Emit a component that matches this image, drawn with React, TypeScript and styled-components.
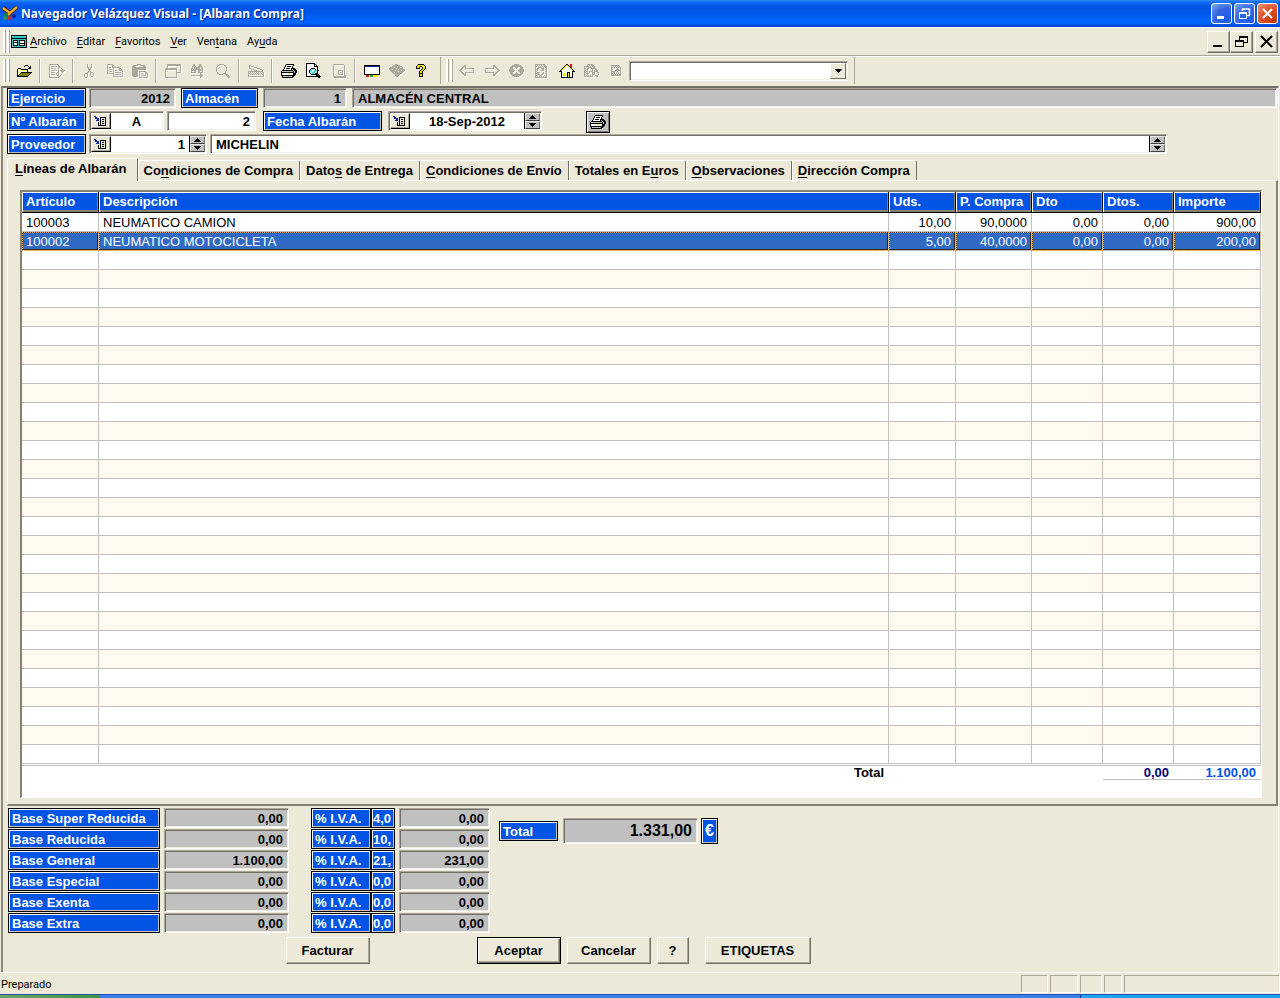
import React from "react";
import styled, { createGlobalStyle, css } from "styled-components";

const FACE = "#ece9d8";
const BLUE = "#0054e3";
const DARK = "#716f64";
const MID = "#aca899";
const SILVER = "#c0c0c0";

const Global = createGlobalStyle`
  *, *::before, *::after { box-sizing: border-box; }
  body { margin: 0; background: ${FACE}; font-family: "Liberation Sans", Arial, sans-serif; font-size: 13px; color: #000; }
  button, input, select { font: inherit; color: inherit; margin: 0; }
  button { padding: 0; }
`;

/* ---------- pixel icons ---------- */

const PALETTE: Record<string, string> = {
  k: "#000000", g: "#aca899", w: "#ffffff", y: "#ffff66", o: "#808000", r: "#d81818",
  b: "#1020a0", c: "#40d8e8", e: "#30a030", s: "#c0c0c0", Y: "#f8e800", t: "#38c8c8",
};

const ART: Record<string, string[]> = {
  open: [
    ".........kkk....",
    "........k...k.k.",
    ".............kk.",
    "..kkk.......kkk.",
    ".kyyykkkkkkk....",
    ".kywywywywyk....",
    ".kwywywywywk....",
    ".kywykkkkkkkkkkk",
    ".kwykoooooooook.",
    ".kykoooooooook..",
    ".kkoooooooook...",
    ".kkkkkkkkkkk....",
  ],
  exportar: [
    "gggggggggg......",
    "g........g......",
    "g.gggggg.gg.....",
    "g........ggg....",
    "g.ggggg..g..g...",
    "g........g...g..",
    "g.gggggg.g.ggggg",
    "g........g..ggg.",
    "g.gggg..gg...g..",
    "g......g.g......",
    "g.gggg.g.g..g...",
    "g.......gg.g....",
    "g........gg.....",
    "gggggggggg......",
  ],
  cut: [
    ".....g...g......",
    ".....g...g......",
    ".....g...g......",
    ".....gg.gg......",
    "......g.g.......",
    "......ggg.......",
    ".......g........",
    "......ggg.......",
    ".....gg.ggg.....",
    "...ggg..g..g....",
    "..g..g..g..g....",
    "..g..g..g..g....",
    "..g..g...gg.....",
    "...gg...........",
  ],
  copy: [
    "gggggg..........",
    "g....gg.........",
    "g....g.g........",
    "g.gg.gggggggg...",
    "g.....g.....gg..",
    "g.ggg.g.....g.g.",
    "g.....g.gg..gggg",
    "g.ggg.g........g",
    "g.....g.gggggg.g",
    "ggggggg........g",
    "......g.gggggg.g",
    "......g........g",
    "......gggggggggg",
  ],
  paste: [
    ".....gggg.......",
    ".ggggg..ggggg...",
    "ggg........ggg..",
    "gggggggggggggg..",
    "gggggggggggggg..",
    "gggggggggggggg..",
    "gggggg..........",
    "gggggg.ggggggg..",
    "gggggg.g.....gg.",
    "gggggg.g.ggg.ggg",
    "gggggg.g.......g",
    "gggggg.g.ggggg.g",
    ".ggggg.g.......g",
    ".......ggggggggg",
  ],
  windows: [
    "..gggggggggggggg",
    "..gggggggggggggg",
    "..g............g",
    "..g............g",
    "gggggggggggg...g",
    "gggggggggggg...g",
    "g..........g...g",
    "g..........g...g",
    "g..........ggggg",
    "g..........g....",
    "g..........g....",
    "g..........g....",
    "g..........g....",
    "gggggggggggg....",
  ],
  find: [
    "...gg....gg.....",
    "...gg....gg.....",
    "..gggg..gggg....",
    "..g.gggggg.g....",
    ".gg.gggggg.gg...",
    ".g.gggggggg.g...",
    ".ggggg..ggggg...",
    ".g..gg..gg..g...",
    ".ggggg..ggggg...",
    "..........g.....",
    "..........gg....",
    ".gggggggggggg...",
    "..........gg....",
    "..........g.....",
  ],
  zoom: [
    "....ggggg.......",
    "..gg.....gg.....",
    "..g.......g.....",
    ".g..g......g....",
    ".g.g.......g....",
    ".g.........g....",
    ".g.........g....",
    ".g........g.....",
    "..g.......g.....",
    "..gg....ggg.....",
    "....gggg..ggg...",
    "...........ggg..",
    "............ggg.",
    ".............gg.",
  ],
  scanner: [
    ".gg.............",
    ".g.ggg..........",
    ".g....ggg.......",
    ".gg......ggg....",
    "...ggg......gg..",
    "......ggg.....g.",
    "ggggggggggggggg.",
    "g.g.g.g.g.g.g.gg",
    "gg.g.g.g.g.g.g.g",
    "g.g.g.g.g.g.g.gg",
    "g..............g",
    "gggggggggggggggg",
  ],
  print: [
    ".....kkkkkkkk...",
    "....kwwwwwwwk...",
    "....kwkkkkwk....",
    "...kwwwwwwwk....",
    "...kwkkkkwkkkk..",
    "..kwwwwwwwk.kkk.",
    ".kkkkkkkkkkk.kkk",
    "kssssssssssskskk",
    "kkkkkkkkkkkkkskk",
    "kwwwwwwYYwwwkkk.",
    "kwwwwwwwwwwwkkk.",
    "kkkkkkkkkkkkkk..",
    ".kssssssssskk...",
    ".kkkkkkkkkkk....",
  ],
  preview: [
    "kkkkkkkkk.......",
    "kwwwwwwwkk......",
    "kwwwwwwwkwk.....",
    "kwwwwwwwkkkk....",
    "kwwwwwwwwwwk....",
    "kwwwwkkkkwwk....",
    "kwwwkccwwkwk....",
    "kwwkccwwccskk...",
    "kwwkcwwcccsk....",
    "kwwkcwcccwsk....",
    "kwwwkcccwkkk....",
    "kwwwwkkkkkkkk...",
    "kwwwwwwwwwkkkk..",
    "kkkkkkkkkkkkkkk.",
    "............kk..",
  ],
  page: [
    "..ggggggggggg...",
    "..g..........g..",
    "..g..........g..",
    "..g..........g..",
    "..g..........g..",
    "..g..........g..",
    "..g....ggggg.g..",
    "..g....g...g.g..",
    "..g....g.g.g.g..",
    "..g....g...g.g..",
    "..g....ggggg.g..",
    "..g..........gg.",
    "..ggggggggggggg.",
    "...gggggggggggg.",
  ],
  screen: [
    "kkkkkkkkkkkkkkkk",
    "kbbbbbbbbbbbbbbk",
    "kwwwwwwwwwwwwwwk",
    "kwwwwwwwwwwwwwwk",
    "kwwwwwwwwwwwwwwk",
    "kwwwwwwwwwwwwwwk",
    "kwwwwwwwwwwwwwwk",
    "kwwwwwwwwwwwwwwk",
    "kwwwwwwwwwwwwwwk",
    "kkkkkkkkkkkkkkkk",
    "..rrr.eee.YYYY..",
    "..rrr.eee.YYYY..",
  ],
  book: [
    "......ggg.......",
    "....ggggggg.....",
    "...ggggg.gggg...",
    ".gggg.ggggg.gg..",
    "ggggggg.gggggg..",
    "ggg.ggggg.gggggg",
    ".ggggg.ggggg.ggg",
    "..ggggggg.ggggg.",
    "...gg.gggggggg..",
    "....ggggggggg...",
    ".....gggggg.....",
    "......gggg......",
    ".......gg.......",
  ],
  help: [
    "....kkkkkk......",
    "...kYYYYYYk.....",
    "..kYYYkkYYYk....",
    "..kYYk..kYYk....",
    "..kkkk..kYYk....",
    ".......kYYk.....",
    "......kYYk......",
    ".....kYYk.......",
    ".....kYYk.......",
    ".....kkkk.......",
    ".....kYYk.......",
    ".....kYYk.......",
    ".....kkkk.......",
  ],
  back: [
    ".....gg.........",
    "....ggg.........",
    "...gg.g.........",
    "..gg..ggggggggg.",
    ".gg...........g.",
    "gg............g.",
    ".gg...........g.",
    "..gg..ggggggggg.",
    "...gg.g.........",
    "....ggg.........",
    ".....gg.........",
  ],
  forward: [
    ".........gg.....",
    ".........ggg....",
    ".........g.gg...",
    ".ggggggggg..gg..",
    ".g...........gg.",
    ".g............gg",
    ".g...........gg.",
    ".ggggggggg..gg..",
    ".........g.gg...",
    ".........ggg....",
    ".........gg.....",
  ],
  stop: [
    ".....ggggg......",
    "...ggggggggg....",
    "..ggggggggggg...",
    ".ggg..ggg..ggg..",
    ".ggg...g...ggg..",
    "ggggg.....ggggg.",
    "gggggg...gggggg.",
    "ggggg.....ggggg.",
    ".ggg...g...ggg..",
    ".ggg..ggg..ggg..",
    "..ggggggggggg...",
    "...ggggggggg....",
    ".....ggggg......",
  ],
  refresh: [
    ".gggggggggg.....",
    ".g.g.g.g.ggg....",
    ".gg.g.g.g.ggg...",
    ".g..gggg.g.gg...",
    ".g.gg..ggg..g...",
    ".ggg....gg.gg...",
    ".g.g...ggg..g...",
    ".gg........gg...",
    ".g.ggg...g..g...",
    ".gggg...gg.gg...",
    ".g.ggg.gg...g...",
    ".gg..ggg..g.g...",
    ".g.g.g.g.g.gg...",
    ".gggggggggggg...",
  ],
  home: [
    ".......kk..rr...",
    "......kYYk.rr...",
    ".....kYwwYkrr...",
    "....kYwwwwYkr...",
    "...kYwwwwwwYk...",
    "..kYwwwwwwwwYk..",
    ".kYwwwwwwwwwwYk.",
    "kkkwwwwwwwwwwkkk",
    "..kwwwwwkkkwwk..",
    "..kwYYYwkYkwwk..",
    "..kwYYYwkYkwwk..",
    "..kwYYYwkYkwwk..",
    "..kwwwwwkYkwwk..",
    "..kkkkkkkkkkkk..",
  ],
  search: [
    "...gggggg.......",
    "...g.g.ggg......",
    "ggggg.g.ggg.....",
    "g.g.gggg.gg.....",
    "gg.gg..ggggg....",
    "g.gg....g..gg...",
    "gg.g....g.g.gg..",
    "g.gg.gggg.gggg..",
    "gg.g.g..ggg..gg.",
    "g.ggg...g.g...g.",
    "gg.g....ggg...g.",
    "g.g.g.g.g..ggg..",
    "ggggggggg...gg..",
  ],
  check: [
    "..gggggggg......",
    "..g.g.g.ggg.....",
    "..gg.g.g.ggg....",
    "..g.....g..g....",
    "..gg...ggg.g....",
    "..g...gg.ggg....",
    "..ggggg.g..g....",
    "..g.gg.g.g.g....",
    "..gg.g.g.g.g....",
    "..g.g.g.g.gg....",
    "..gggggggggg....",
  ],
  pick: [
    "bb............",
    ".bb...kkkkkk..",
    ".bbbb.k....k..",
    "...bb.k.kk.k..",
    "..bbb.k....k..",
    "......k.kk.k..",
    "....k.k....k..",
    "....k.k.kk.k..",
    "....k.k....k..",
    "....kkkkkkkk..",
  ],
  up: ["...k...", "..kkk..", ".kkkkk.", "kkkkkkk"],
  down: ["kkkkkkk", ".kkkkk.", "..kkk..", "...k..."],
  form: [
    "kkkkkkkkkkkkkkkk",
    "kttttttttttttttk",
    "kttttttttttttttk",
    "kkkkkkkkkkkkkkkk",
    "kttttttttttttttk",
    "ktkkkkktkkkkkktk",
    "ktkwwwktkwwwwktk",
    "ktkkkkktkwwwwktk",
    "ktkwwwktkkkkkktk",
    "ktkwwwktkwwwwktk",
    "ktkkkkktkkkkkktk",
    "kttttttttttttttk",
    "kkkkkkkkkkkkkkkk",
  ],
};

const PixelSvg = styled.svg<{ $off?: boolean }>`
  display: block;
  flex: none;
  ${(p) => p.$off && css`filter: drop-shadow(1px 1px 0 #ffffff);`}
`;

function Icon({ name, off }: { name: string; off?: boolean }) {
  const rows = ART[name];
  const w = rows[0].length;
  return (
    <PixelSvg $off={off} width={w} height={rows.length} viewBox={`0 0 ${w} ${rows.length}`} shapeRendering="crispEdges" aria-hidden="true">
      {rows.flatMap((row, y) =>
        [...row].map((c, x) => (c === "." ? null : <rect key={`${x}-${y}`} x={x} y={y} width="1" height="1" fill={PALETTE[c]} />)),
      )}
    </PixelSvg>
  );
}

/* ---------- window chrome ---------- */

const Window = styled.div`
  min-height: 100vh;
  display: flex;
  flex-direction: column;
`;

const TitleBar = styled.header`
  height: 27px;
  display: flex;
  align-items: center;
  padding: 0 2px;
  gap: 3px;
  background: linear-gradient(#2b8cf5 0, #0a62ee 3px, #0054e3 8px, #0058ea 14px, #0066ff 22px, #0060f6 24px, #003dc0 27px);
`;

const Title = styled.h1`
  flex: 1;
  margin: 0;
  font: bold 12px/24px "Noto Sans", "Open Sans", sans-serif;
  color: #fff;
  text-shadow: 1px 1px 0 #0a1f80;
  white-space: nowrap;
`;

const CaptionButtons = styled.div`
  display: flex;
  gap: 2px;
  padding-bottom: 1px;
`;

const CaptionButton = styled.button<{ $close?: boolean }>`
  width: 21px;
  height: 21px;
  display: grid;
  place-items: center;
  border: 1px solid #fff;
  border-radius: 3px;
  background: ${(p) =>
    p.$close
      ? "radial-gradient(circle at 80% 85%, #c83808, #e0532c 55%, #ee9a80)"
      : "radial-gradient(circle at 80% 85%, #1a5cf0, #3468dd 55%, #86a8f2)"};
`;

const MenuBar = styled.nav`
  height: 29px;
  display: flex;
  align-items: center;
  padding: 0 2px 0 3px;
  border-top: 1px solid #fff;
  border-bottom: 1px solid ${MID};
  font: 11px/14px Roboto, Tahoma, sans-serif;
`;

const Grip = styled.span`
  width: 7px;
  height: 23px;
  flex: none;
  margin-right: 1px;
  background: linear-gradient(90deg, #fff 2px, ${MID} 2px, ${MID} 3px, transparent 3px, transparent 4px, #fff 4px, #fff 6px, ${MID} 6px);
`;

const MenuItems = styled.div`
  flex: 1;
  display: flex;
  gap: 10px;
  padding-left: 3px;
`;

const MenuItem = styled.button`
  border: 0;
  background: none;
`;

const MdiButtons = styled.div`
  display: flex;
`;

const MdiButton = styled.button<{ $apart?: boolean }>`
  width: 23px;
  height: 22px;
  display: grid;
  place-items: center;
  margin-left: ${(p) => (p.$apart ? 2 : 0)}px;
  border: 1px solid;
  border-color: #fff ${DARK} ${DARK} #fff;
  box-shadow: inset -1px -1px 0 ${MID};
  background: ${FACE};
`;

const ToolBar = styled.div`
  height: 30px;
  display: flex;
  align-items: flex-start;
  padding-left: 3px;
  border-top: 1px solid #fff;
`;

const ToolGroup = styled.div`
  display: flex;
  align-items: center;
  height: 27px;
  padding-right: 6px;
  margin-right: 5px;
  border-right: 1px solid ${MID};
`;

const Tool = styled.button`
  width: 25px;
  height: 24px;
  display: grid;
  place-items: center;
  border: 0;
  background: none;
`;

const ToolSeparator = styled.span`
  width: 2px;
  height: 24px;
  margin: 0 3px;
  background: linear-gradient(90deg, ${MID} 1px, #fff 1px);
`;

const sunken = css`
  border: 1px solid;
  border-color: ${MID} #fff #fff ${MID};
  box-shadow: inset 1px 1px 0 ${DARK}, inset -1px -1px 0 #f1efe2;
`;

const AddressField = styled.div`
  ${sunken}
  display: flex;
  width: 219px;
  height: 20px;
  padding: 1px;
  background: #fff;
`;

const AddressSelect = styled.select`
  flex: 1;
  min-width: 0;
  appearance: none;
  border: 0;
  background: transparent;
`;

const AddressArrow = styled.span`
  width: 16px;
  display: grid;
  place-items: center;
  background: ${FACE};
  border: 1px solid;
  border-color: #fff ${DARK} ${DARK} #fff;
`;

/* ---------- form ---------- */

const Workspace = styled.main`
  flex: 1;
  margin: 0 1px;
  padding: 0 0 7px 4px;
  border-top: 2px solid ${DARK};
  border-left: 2px solid #8d8a7c;
  border-right: 1px solid #fff;
  font-weight: bold;
`;

const FormRows = styled.div`
  display: flex;
  flex-direction: column;
  gap: 3px;
  padding-bottom: 4px;
`;

const FormRow = styled.div`
  display: flex;
  height: 20px;
`;

const tag = css`
  display: block;
  height: 20px;
  flex: none;
  padding: 0 2px;
  border: 1px solid #000;
  box-shadow: inset 1px 1px 0 #fff, inset -1px -1px 0 ${SILVER};
  background: ${BLUE};
  color: #fff;
  line-height: 19px;
  white-space: nowrap;
  overflow: hidden;
`;

const Tag = styled.label<{ $w: number; $ml?: number }>`
  ${tag}
  padding-left: 3px;
  width: ${(p) => p.$w}px;
  margin-left: ${(p) => p.$ml ?? 0}px;
`;

const Field = styled.div<{ $w?: number; $ml?: number; $mr?: number; $grey?: boolean; $tall?: boolean }>`
  ${sunken}
  display: flex;
  padding: 1px;
  height: ${(p) => (p.$tall ? 26 : 20)}px;
  ${(p) => (p.$w ? `width: ${p.$w}px; flex: none;` : "flex: 1; min-width: 0;")}
  margin-left: ${(p) => p.$ml ?? 3}px;
  margin-right: ${(p) => p.$mr ?? 0}px;
  background: ${(p) => (p.$grey ? SILVER : "#fff")};
  font-size: ${(p) => (p.$tall ? 16 : 13)}px;
`;

const Value = styled.input<{ $align?: string }>`
  flex: 1;
  min-width: 0;
  width: 100%;
  border: 0;
  outline: 0;
  padding: 0 4px;
  background: transparent;
  font-weight: bold;
  text-align: ${(p) => p.$align ?? "right"};
`;

const PickButton = styled.button`
  width: 20px;
  display: grid;
  place-items: center;
  border: 1px solid;
  border-color: #fff #000 #000 #fff;
  box-shadow: inset -1px -1px 0 ${MID};
  background: ${FACE};
`;

const Spinner = styled.span`
  width: 16px;
  display: flex;
  flex-direction: column;
  border-left: 1px solid #000;
`;

const SpinButton = styled.button`
  flex: 1;
  display: grid;
  place-items: center;
  border: 1px solid;
  border-color: #e8e8e8 #707070 #404040 #e8e8e8;
  background: ${SILVER};
`;

const PrintButton = styled.button`
  width: 24px;
  height: 22px;
  display: grid;
  place-items: center;
  margin-left: 44px;
  border: 1px solid #000;
  box-shadow: inset 1px 1px 0 #fff, inset -1px -1px 0 #808080;
  background: ${SILVER};
`;

function Spin({ label }: { label: string }) {
  return (
    <Spinner>
      <SpinButton aria-label={`${label}: subir`}><Icon name="up" /></SpinButton>
      <SpinButton aria-label={`${label}: bajar`}><Icon name="down" /></SpinButton>
    </Spinner>
  );
}

/* ---------- tabs ---------- */

const Tabs = styled.div`
  display: flex;
  align-items: flex-end;
  height: 22px;
`;

const Tab = styled.button<{ $active?: boolean }>`
  position: relative;
  height: ${(p) => (p.$active ? 23 : 20)}px;
  margin-bottom: ${(p) => (p.$active ? -1 : 0)}px;
  padding: ${(p) => (p.$active ? "0 10px 3px 7px" : "0 6px 0 5px")};
  border: 0 solid #fff;
  border-width: 1px 1px 0 1px;
  border-right-color: ${DARK};
  border-radius: 2px 2px 0 0;
  background: ${FACE};
  font-weight: bold;
  line-height: 18px;
  white-space: nowrap;
`;

const Key = styled.u`
  text-underline-offset: 2px;
`;

const Panel = styled.section`
  padding: 9px 14px 6px 12px;
  border: solid;
  border-width: 1px 2px 2px 1px;
  border-color: #fff #85826f #85826f #fff;
`;

const Sheet = styled.div`
  border: solid;
  border-width: 2px 1px 1px 2px;
  border-color: #85826f #fff #fff #85826f;
  padding-bottom: 17px;
  background: #fff;
`;

const Lines = styled.table`
  width: 100%;
  table-layout: fixed;
  border-collapse: separate;
  border-spacing: 0;
`;

const HeadCell = styled.th`
  height: 21px;
  padding: 0 4px;
  text-align: left;
  line-height: 18px;
  color: #fff;
  background: ${BLUE};
  border-right: 1px solid #000;
  border-bottom: 1px solid #000;
  box-shadow: inset 1px 1px 0 #fff, inset -1px -2px 0 #85826f;
  white-space: nowrap;
`;

const BodyRow = styled.tr<{ $selected?: boolean }>`
  font-weight: normal;
  &:nth-child(even) { background: #fffaf0; }
  ${(p) =>
    p.$selected &&
    css`
      && { background: #316ac5; color: #fff; }
      td { outline: 1px dotted #f0b050; outline-offset: -1px; box-shadow: inset 0 0 0 1px #302818; }
    `}
`;

const Cell = styled.td<{ $num?: boolean }>`
  height: 19px;
  padding: 0 4px;
  line-height: 17px;
  border-right: 1px solid ${SILVER};
  border-bottom: 1px solid ${SILVER};
  text-align: ${(p) => (p.$num ? "right" : "left")};
  white-space: nowrap;
  overflow: hidden;
  tr:last-child > & { border-bottom: 0; height: 18px; }
`;

const FootCell = styled.td<{ $color?: string }>`
  height: 17px;
  padding: 0 5px;
  line-height: 13px;
  border-top: 3px double ${SILVER};
  border-bottom: 1px solid ${(p) => (p.$color ? SILVER : "transparent")};
  color: ${(p) => p.$color ?? "#000"};
  text-align: right;
`;

/* ---------- totals ---------- */

const Summary = styled.div`
  display: flex;
  align-items: flex-start;
  padding: 2px 0 4px 1px;
`;

const Bases = styled.div`
  display: flex;
  flex-direction: column;
  gap: 1px;
`;

const RateTag = styled.input`
  ${tag}
  width: 24px;
  padding: 0 0 0 1px;
  font-weight: bold;
`;

const GrandTotal = styled.div`
  display: flex;
  align-items: center;
  padding: 10px 0 0 9px;
`;

const Currency = styled.span`
  ${tag}
  width: 17px;
  height: 26px;
  margin-left: 3px;
  padding: 0 3px;
  font-size: 16px;
  line-height: 24px;
`;

const Actions = styled.div`
  display: flex;
  padding-left: 279px;
`;

const Action = styled.button<{ $w: number; $ml?: number; $default?: boolean }>`
  width: ${(p) => p.$w}px;
  height: 27px;
  margin-left: ${(p) => p.$ml ?? 0}px;
  padding-right: 1px;
  border: 1px solid;
  border-color: ${(p) => (p.$default ? "#000" : `#fff ${DARK} ${DARK} #fff`)};
  box-shadow: ${(p) =>
    p.$default
      ? `inset 1px 1px 0 #fff, inset -1px -1px 0 ${DARK}, inset -2px -2px 0 ${MID}`
      : `inset -1px -1px 0 ${MID}`};
  background: ${FACE};
  font-weight: bold;
`;

const StatusBar = styled.footer`
  height: 22px;
  display: flex;
  border-top: 1px solid #fff;
  padding: 2px 0 1px 1px;
  font: 11px/20px Roboto, Tahoma, sans-serif;
`;

const StatusText = styled.span`
  flex: 1;
`;

const StatusPane = styled.span<{ $w: number }>`
  width: ${(p) => p.$w}px;
  margin-left: 2px;
  border: 1px solid;
  border-color: ${MID} #fff #fff ${MID};
`;

const TaskStrip = styled.div`
  height: 4px;
  display: flex;
  border-top: 1px solid #1f50b8;
  background: #3a80ea;
`;

const StartEdge = styled.div`
  width: 100px;
  background: linear-gradient(90deg, #6aa860, #3c963c);
`;

const TrayEdge = styled.div`
  width: 200px;
  margin-left: auto;
  border-left: 1px solid #083890;
  background: #18a4f0;
`;

/* ---------- data ---------- */

const tools: [string, string, boolean?][] = [
  ["open", "Abrir"], ["|", "1"], ["exportar", "Exportar", true], ["|", "2"],
  ["cut", "Cortar", true], ["copy", "Copiar", true], ["paste", "Pegar", true], ["|", "3"],
  ["windows", "Ventanas", true], ["find", "Buscar", true], ["zoom", "Lupa", true], ["|", "4"],
  ["scanner", "Escanear", true], ["|", "5"],
  ["print", "Imprimir"], ["preview", "Vista previa"], ["page", "Configurar", true], ["|", "6"],
  ["screen", "Pantalla"], ["book", "Manual", true], ["help", "Ayuda"],
];

const navTools: [string, string, boolean?][] = [
  ["back", "Atrás", true], ["forward", "Adelante", true], ["stop", "Detener", true],
  ["refresh", "Actualizar", true], ["home", "Inicio"], ["search", "Búsqueda", true], ["check", "Validar", true],
];

const menus = [["", "A", "rchivo"], ["", "E", "ditar"], ["", "F", "avoritos"], ["", "V", "er"], ["Ven", "t", "ana"], ["Ay", "u", "da"]];

const tabs = [
  ["", "L", "íneas de Albarán"], ["Co", "n", "diciones de Compra"], ["Dato", "s", " de Entrega"],
  ["", "C", "ondiciones de Envío"], ["Totales en E", "u", "ros"], ["", "O", "bservaciones"], ["", "D", "irección Compra"],
];

const columns: [string, number?][] = [["Artículo", 77], ["Descripción"], ["Uds.", 67], ["P. Compra", 76], ["Dto", 71], ["Dtos.", 71], ["Importe", 87]];

const lines = [
  ["100003", "NEUMATICO CAMION", "10,00", "90,0000", "0,00", "0,00", "900,00"],
  ["100002", "NEUMATICO MOTOCICLETA", "5,00", "40,0000", "0,00", "0,00", "200,00"],
];
const ROW_COUNT = 29;

const bases = [
  ["Base Super Reducida", "0,00", "4,0", "0,00"],
  ["Base Reducida", "0,00", "10,", "0,00"],
  ["Base General", "1.100,00", "21,", "231,00"],
  ["Base Especial", "0,00", "0,0", "0,00"],
  ["Base Exenta", "0,00", "0,0", "0,00"],
  ["Base Extra", "0,00", "0,0", "0,00"],
];

function Mnemonic({ parts }: { parts: string[] }) {
  return <>{parts[0]}<Key>{parts[1]}</Key>{parts[2]}</>;
}

export default function App() {
  return (
    <Window>
      <Global />
      <TitleBar>
        <svg width="16" height="18" viewBox="0 0 16 18" aria-hidden="true">
          <path d="M1 3 L8 8 L15 2 M8 8 L6 10" stroke="#302010" strokeWidth="4" fill="none" />
          <path d="M1 3 L8 8 L15 2 M8 8 L6 10" stroke="#f8a828" strokeWidth="2.500" fill="none" />
          <circle cx="4" cy="10" r="2" fill="#0a8a30" />
          <circle cx="3" cy="13" r="2" fill="#2a9a50" />
          <circle cx="7" cy="13" r="2" fill="#d02818" />
          <circle cx="12" cy="11" r="2" fill="#102080" />
        </svg>
        <Title>Navegador Velázquez Visual - [Albaran Compra]</Title>
        <CaptionButtons>
          <CaptionButton aria-label="Minimizar">
            <svg width="15" height="15" viewBox="0 0 15 15"><rect x="3" y="10" width="7" height="3" fill="#fff" /></svg>
          </CaptionButton>
          <CaptionButton aria-label="Restaurar">
            <svg width="15" height="15" viewBox="0 0 15 15" fill="none" stroke="#fff">
              <path d="M5.500 5V3M5 3H13M12.500 3V9M13 9.500H10" strokeWidth="1.500" />
              <path d="M2.500 6.500H9.500V12.500H2.500ZM2 7.500H10" />
            </svg>
          </CaptionButton>
          <CaptionButton $close aria-label="Cerrar">
            <svg width="15" height="15" viewBox="0 0 15 15"><path d="M3 3L12 12M12 3L3 12" stroke="#fff" strokeWidth="2.200" /></svg>
          </CaptionButton>
        </CaptionButtons>
      </TitleBar>

      <MenuBar>
        <Grip />
        <Icon name="form" />
        <MenuItems>
          {menus.map((m) => <MenuItem key={m.join("")}><Mnemonic parts={m} /></MenuItem>)}
        </MenuItems>
        <MdiButtons>
          <MdiButton aria-label="Minimizar documento">
            <svg width="13" height="13" viewBox="0 0 13 13"><rect x="1" y="10" width="9" height="2" /></svg>
          </MdiButton>
          <MdiButton aria-label="Restaurar documento">
            <svg width="13" height="13" viewBox="0 0 13 13" fill="none" stroke="#000" shapeRendering="crispEdges">
              <path d="M4.500 5V1.500H12.500V7.500H9M4 2.500H13" />
              <path d="M0.500 5.500H8.500V11.500H0.500ZM0 6.500H9" />
            </svg>
          </MdiButton>
          <MdiButton $apart aria-label="Cerrar documento">
            <svg width="13" height="13" viewBox="0 0 13 13"><path d="M1 1L12 12M12 1L1 12" stroke="#000" strokeWidth="2" /></svg>
          </MdiButton>
        </MdiButtons>
      </MenuBar>

      <ToolBar>
        <ToolGroup>
          <Grip />
          {tools.map(([icon, label, off]) =>
            icon === "|" ? <ToolSeparator key={label} /> : (
              <Tool key={label} aria-label={label} disabled={off}><Icon name={icon} off={off} /></Tool>
            ),
          )}
        </ToolGroup>
        <ToolGroup>
          <Grip />
          {navTools.map(([icon, label, off]) => (
            <Tool key={label} aria-label={label} disabled={off}><Icon name={icon} off={off} /></Tool>
          ))}
          <AddressField>
            <AddressSelect aria-label="Dirección"><option /></AddressSelect>
            <AddressArrow><Icon name="down" /></AddressArrow>
          </AddressField>
        </ToolGroup>
      </ToolBar>

      <Workspace>
        <FormRows>
          <FormRow>
            <Tag $w={79} htmlFor="ejercicio">Ejercicio</Tag>
            <Field $w={87} $grey><Value id="ejercicio" defaultValue="2012" readOnly /></Field>
            <Tag $w={77} $ml={5} htmlFor="almacen">Almacén</Tag>
            <Field $w={84} $ml={5} $grey><Value id="almacen" defaultValue="1" readOnly /></Field>
            <Field $ml={5} $mr={1} $grey><Value $align="left" aria-label="Nombre del almacén" defaultValue="ALMACÉN CENTRAL" readOnly /></Field>
          </FormRow>
          <FormRow>
            <Tag $w={79} htmlFor="serie">Nº Albarán</Tag>
            <Field $w={75}>
              <PickButton aria-label="Elegir serie"><Icon name="pick" /></PickButton>
              <Value $align="center" id="serie" defaultValue="A" />
            </Field>
            <Field $w={89}><Value aria-label="Número" defaultValue="2" /></Field>
            <Tag $w={119} $ml={7} htmlFor="fecha">Fecha Albarán</Tag>
            <Field $w={154} $ml={6}>
              <PickButton aria-label="Elegir fecha"><Icon name="pick" /></PickButton>
              <Value $align="center" id="fecha" defaultValue="18-Sep-2012" />
              <Spin label="Fecha" />
            </Field>
            <PrintButton aria-label="Imprimir albarán"><Icon name="print" /></PrintButton>
          </FormRow>
          <FormRow>
            <Tag $w={79} htmlFor="proveedor">Proveedor</Tag>
            <Field $w={118}>
              <PickButton aria-label="Elegir proveedor"><Icon name="pick" /></PickButton>
              <Value id="proveedor" defaultValue="1" />
              <Spin label="Proveedor" />
            </Field>
            <Field $ml={3} $mr={111}>
              <Value $align="left" aria-label="Nombre del proveedor" defaultValue="MICHELIN" />
              <Spin label="Nombre" />
            </Field>
          </FormRow>
        </FormRows>

        <Tabs role="tablist">
          {tabs.map((t, i) => (
            <Tab key={t.join("")} role="tab" aria-selected={i === 0} $active={i === 0}><Mnemonic parts={t} /></Tab>
          ))}
        </Tabs>
        <Panel role="tabpanel">
          <Sheet>
            <Lines>
              <colgroup>
                {columns.map(([name, width]) => <col key={name} width={width} />)}
              </colgroup>
              <thead>
                <tr>{columns.map(([name]) => <HeadCell key={name} scope="col">{name}</HeadCell>)}</tr>
              </thead>
              <tbody>
                {Array.from({ length: ROW_COUNT }, (_, r) => (
                  <BodyRow key={r} $selected={r === 1}>
                    {columns.map(([name], c) => <Cell key={name} $num={c > 1}>{lines[r]?.[c]}</Cell>)}
                  </BodyRow>
                ))}
              </tbody>
              <tfoot>
                <tr>
                  <FootCell />
                  <FootCell>Total</FootCell>
                  <FootCell />
                  <FootCell />
                  <FootCell />
                  <FootCell $color="#000080">0,00</FootCell>
                  <FootCell $color={BLUE}>1.100,00</FootCell>
                </tr>
              </tfoot>
            </Lines>
          </Sheet>
        </Panel>

        <Summary>
          <Bases>
            {bases.map(([name, base, rate, tax], i) => (
              <FormRow key={name}>
                <Tag $w={152} htmlFor={`base${i}`}>{name}</Tag>
                <Field $w={125} $ml={4} $grey><Value id={`base${i}`} defaultValue={base} readOnly /></Field>
                <Tag $w={60} $ml={22} htmlFor={`iva${i}`}>% I.V.A.</Tag>
                <RateTag id={`iva${i}`} defaultValue={rate} readOnly />
                <Field $w={91} $ml={4} $grey><Value aria-label={`Cuota ${name}`} defaultValue={tax} readOnly /></Field>
              </FormRow>
            ))}
          </Bases>
          <GrandTotal>
            <Tag $w={59} htmlFor="total">Total</Tag>
            <Field $w={135} $ml={5} $grey $tall><Value id="total" defaultValue="1.331,00" readOnly /></Field>
            <Currency>€</Currency>
          </GrandTotal>
        </Summary>

        <Actions>
          <Action $w={84}>Facturar</Action>
          <Action $w={84} $ml={107} $default>Aceptar</Action>
          <Action $w={84} $ml={6}>Cancelar</Action>
          <Action $w={32} $ml={6}>?</Action>
          <Action $w={106} $ml={16}>ETIQUETAS</Action>
        </Actions>
      </Workspace>

      <StatusBar>
        <StatusText>Preparado</StatusText>
        <StatusPane $w={27} />
        <StatusPane $w={28} />
        <StatusPane $w={22} />
        <StatusPane $w={18} />
        <StatusPane $w={156} />
      </StatusBar>
      <TaskStrip>
        <StartEdge />
        <TrayEdge />
      </TaskStrip>
    </Window>
  );
}
